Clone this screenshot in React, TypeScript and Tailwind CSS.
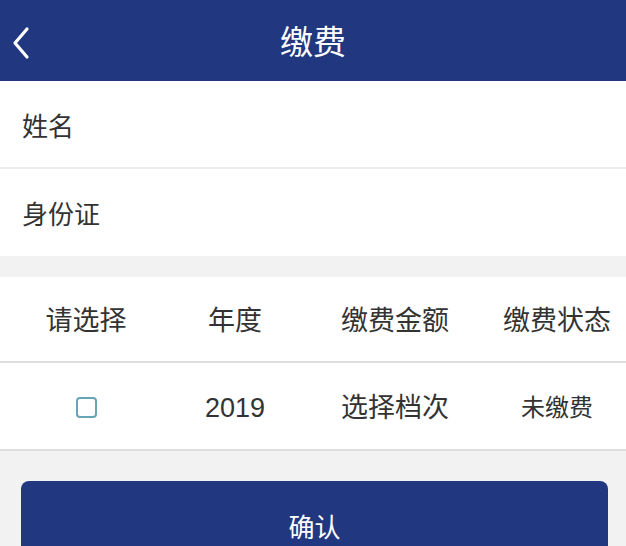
import React from 'react'

const columns = ['请选择', '年度', '缴费金额', '缴费状态']

export default function App() {
  return (
    <div
      className="min-h-[546px] w-[626px] bg-[#f2f2f2] text-[#333]"
      style={{ fontFamily: '"Noto Sans CJK SC", "Noto Sans", sans-serif' }}
    >
      {/* Header */}
      <div className="relative flex h-[81px] items-center justify-center bg-[#213881]">
        <button type="button" className="absolute left-[10px] top-[26px] text-white">
          <svg width="22" height="34" viewBox="0 0 22 34" fill="none" stroke="currentColor" strokeWidth={3.2} strokeLinecap="round" strokeLinejoin="round">
            <path d="M17 3 L5 17 L17 31" />
          </svg>
        </button>
        <h1 className="text-[33px] font-normal text-white">缴费</h1>
      </div>

      {/* Form */}
      <div className="bg-white">
        <div className="flex h-[88px] items-center border-b-2 border-[#ececec] px-[22px] text-[26px]">姓名</div>
        <div className="flex h-[87px] items-center px-[22px] text-[26px]">身份证</div>
      </div>

      {/* Table */}
      <div className="mt-[21px] bg-white">
        <div className="grid h-[86px] grid-cols-[172px_126px_194px_130px] items-center border-b-2 border-[#dedede] text-center text-[27px]">
          {columns.map(c => (
            <span key={c}>{c}</span>
          ))}
        </div>
        <div className="grid h-[88px] grid-cols-[172px_126px_194px_130px] items-center border-b-2 border-[#dedede] text-center text-[27px]">
          <span className="flex justify-center pt-[2px]">
            <span className="h-[21px] w-[21px] rounded-[4px] border-2 border-[#67a4b6]" />
          </span>
          <span className="pt-[4px]" style={{ fontFamily: '"Liberation Sans", sans-serif' }}>2019</span>
          <span>选择档次</span>
          <span className="text-[24px]">未缴费</span>
        </div>
      </div>

      {/* Confirm */}
      <div className="pl-[21px] pr-[18px] pt-[30px]">
        <button
          type="button"
          className="flex h-[80px] w-full items-start justify-center rounded-[8px] bg-[#213881] pt-[25px] text-[26px] text-white"
        >
          确认
        </button>
      </div>
    </div>
  )
}
